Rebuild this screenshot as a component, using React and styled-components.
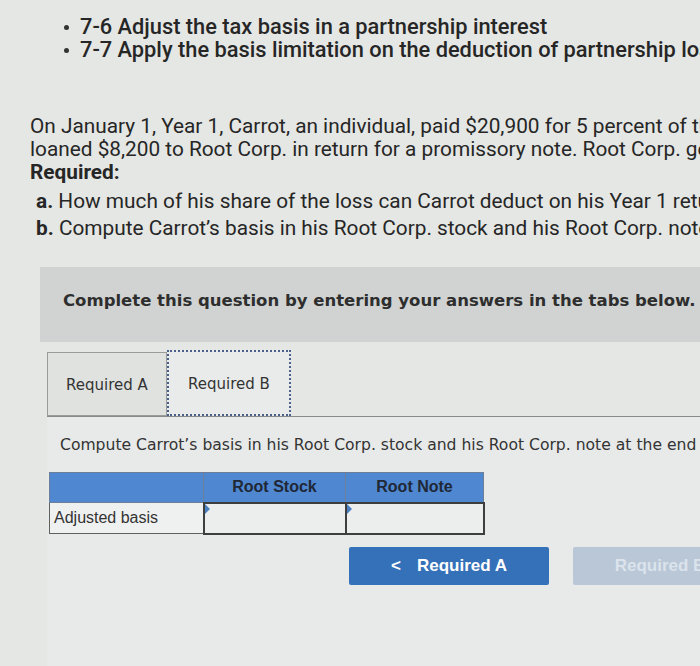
import React from 'react'
import styled, { createGlobalStyle } from 'styled-components'

const GlobalStyle = createGlobalStyle`
  body {
    margin: 0;
    background: #e5e7e4;
    overflow: hidden;
  }
`

const Page = styled.div`
  width: 700px;
  height: 666px;
  overflow: hidden;
  white-space: nowrap;
  color: #262626;
  padding-top: 15px;
  box-sizing: border-box;
`

const Objectives = styled.ul`
  list-style: none;
  margin: 0;
  padding: 0 0 0 80px;
  font-family: Roboto, "Liberation Sans", sans-serif;
  font-weight: 500;
  font-size: 21.8px;
  line-height: 23px;
`

const Objective = styled.li`
  position: relative;
  &::before {
    content: '';
    position: absolute;
    left: -16px;
    top: 10px;
    width: 5px;
    height: 5px;
    border-radius: 50%;
    background: #333;
  }
`

const Problem = styled.div`
  margin: 54px 0 0 30px;
  font-family: Roboto, "Liberation Sans", sans-serif;
  font-size: 20.8px;
  line-height: 23px;
`

const Strong = styled.div`
  font-weight: 700;
`

const Parts = styled.div`
  margin: 4px 0 0 6px;
  line-height: 27px;
  b { font-weight: 700; }
`

const Banner = styled.div`
  margin: 25px 0 0 40px;
  height: 75px;
  box-sizing: border-box;
  background: #d0d3d1;
  display: flex;
  align-items: center;
  padding: 0 0 8px 23px;
  font-family: "DejaVu Sans", Verdana, sans-serif;
  font-weight: 700;
  font-size: 16.5px;
  color: #2e2e2e;
`

const TabBar = styled.div`
  margin: 8px 0 0 47px;
  display: flex;
  align-items: flex-end;
  border-bottom: 1px solid #8a8c8a;
`

const Tab = styled.div`
  box-sizing: border-box;
  height: ${p => (p.$active ? 66 : 64)}px;
  width: ${p => (p.$active ? 124 : 120)}px;
  display: flex;
  align-items: center;
  justify-content: center;
  padding-top: 2px;
  font-family: "DejaVu Sans", Verdana, sans-serif;
  font-size: 15px;
  color: #333;
  background: ${p => (p.$active ? '#e9ebea' : '#e0e2e0')};
  border: ${p => (p.$active ? '2px dotted #4a5f8a' : '1px solid #9a9c9a')};
`

const Panel = styled.div`
  margin-left: 47px;
  background: #e8eae9;
  padding: 16px 0 0 13px;
  height: 250px;
`

const Instruction = styled.div`
  font-family: "DejaVu Sans", Verdana, sans-serif;
  font-size: 15.6px;
  color: #333;
  line-height: 24px;
`

const Table = styled.table`
  margin: 15px 0 0 -11px;
  border-collapse: collapse;
  font-family: "Liberation Sans", Arial, sans-serif;
  font-size: 16px;
`

const HeadCell = styled.th`
  box-sizing: border-box;
  width: ${p => p.$w}px;
  height: 30px;
  background: #4f87d0;
  border: 1px solid #6d7e98;
  font-weight: 700;
  color: #1f2836;
  padding: 0;
`

const LabelCell = styled.td`
  height: 29px;
  background: #eff1f0;
  border: 1px solid #5f6160;
  padding: 0 0 0 4px;
  color: #333;
`

const InputCell = styled.td`
  position: relative;
  height: 29px;
  border: 2px solid #3d3f3f;
  background: #eceeed;
  padding: 0;
  &::before {
    content: '';
    position: absolute;
    left: 0;
    top: 0;
    border-top: 5px solid transparent;
    border-bottom: 5px solid transparent;
    border-left: 5px solid #4a7fc0;
  }
`

const Actions = styled.div`
  margin: 12px 0 0 289px;
  display: flex;
  gap: 24px;
`

const NavButton = styled.div`
  flex: none;
  box-sizing: border-box;
  width: ${p => p.$w}px;
  height: 38px;
  border-radius: 2px;
  display: flex;
  align-items: center;
  justify-content: center;
  gap: 16px;
  font-family: "Liberation Sans", Arial, sans-serif;
  font-weight: 700;
  font-size: 17px;
  color: ${p => (p.$disabled ? '#dbe3ec' : '#fff')};
  background: ${p => (p.$disabled ? '#b9c7d6' : '#3571b8')};
`

export default function App() {
  return (
    <>
      <GlobalStyle />
      <Page>
        <Objectives>
          <Objective>7-6 Adjust the tax basis in a partnership interest</Objective>
          <Objective>7-7 Apply the basis limitation on the deduction of partnership losses</Objective>
        </Objectives>

        <Problem>
          <div>On January 1, Year 1, Carrot, an individual, paid $20,900 for 5 percent of the stock of Root Corp.</div>
          <div>loaned $8,200 to Root Corp. in return for a promissory note. Root Corp. generated a loss</div>
          <Strong>Required:</Strong>
          <Parts>
            <div><b>a.</b> How much of his share of the loss can Carrot deduct on his Year 1 return?</div>
            <div><b>b.</b> Compute Carrot’s basis in his Root Corp. stock and his Root Corp. note at the end of Year 1.</div>
          </Parts>
        </Problem>

        <Banner>Complete this question by entering your answers in the tabs below.</Banner>

        <TabBar>
          <Tab>Required A</Tab>
          <Tab $active>Required B</Tab>
        </TabBar>

        <Panel>
          <Instruction>Compute Carrot’s basis in his Root Corp. stock and his Root Corp. note at the end of Year 1.</Instruction>
          <Table>
            <thead>
              <tr>
                <HeadCell $w={154}></HeadCell>
                <HeadCell $w={142}>Root Stock</HeadCell>
                <HeadCell $w={138}>Root Note</HeadCell>
              </tr>
            </thead>
            <tbody>
              <tr>
                <LabelCell>Adjusted basis</LabelCell>
                <InputCell />
                <InputCell />
              </tr>
            </tbody>
          </Table>
          <Actions>
            <NavButton $w={200}>
              <span>&lt;</span>
              <span>Required A</span>
            </NavButton>
            <NavButton $w={200} $disabled>
              <span>Required B</span>
              <span>&gt;</span>
            </NavButton>
          </Actions>
        </Panel>
      </Page>
    </>
  )
}
